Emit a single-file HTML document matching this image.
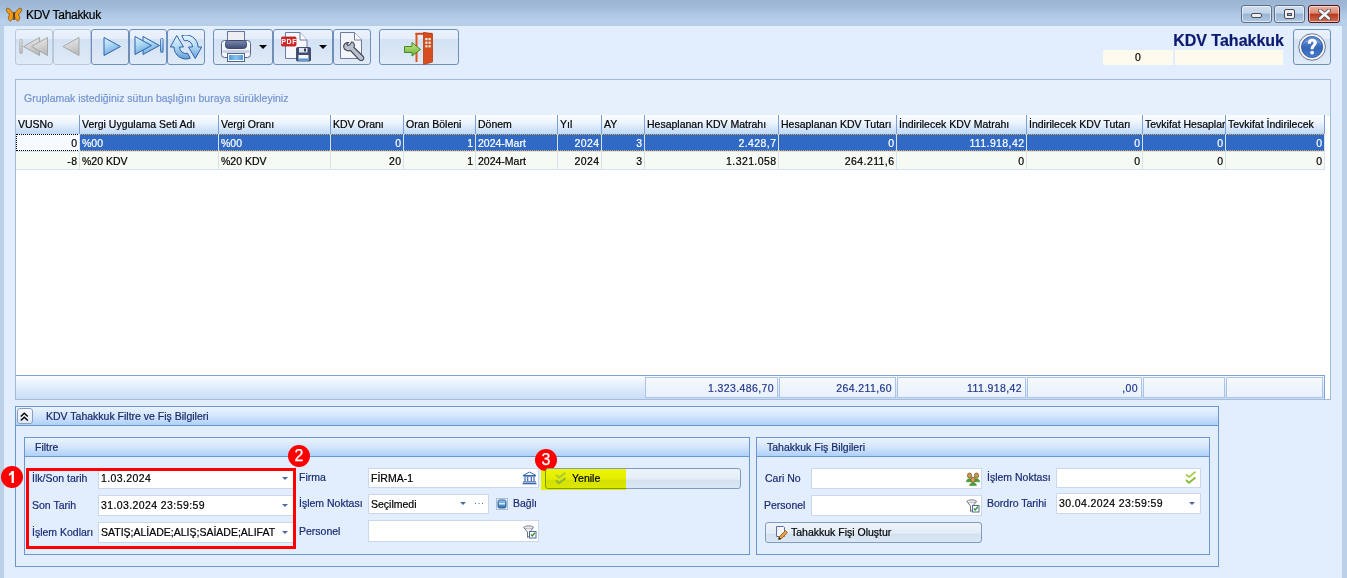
<!DOCTYPE html>
<html><head><meta charset="utf-8">
<style>
*{box-sizing:border-box;margin:0;padding:0}
html,body{width:1347px;height:578px;overflow:hidden}
body{-webkit-text-stroke:0.2px currentColor;position:relative;background:#e2eefd;font-family:"Liberation Sans",sans-serif;font-size:10.5px;color:#1e1e50}
.a{position:absolute}
#tb{left:0;top:0;width:1347px;height:26px;background:linear-gradient(#9ab4d3 0%,#a2bbd8 30%,#aec7e2 55%,#b8d0ea 80%,#b6cee8 100%)}
#lb{left:0;top:26px;width:4px;height:552px;background:#bcd1e8}
#rb{left:1342px;top:26px;width:5px;height:552px;background:#bcd1e8}
.btn{position:absolute;top:29px;height:36px;border:1px solid #8aa6c8;border-radius:3px;background:linear-gradient(#eaf2fc 0%,#e5eefa 25%,#d3e2f4 27%,#d8e5f5 60%,#e0ebf8 100%)}
.btn.dis{border-color:#b9c9dc}
.wbtn{position:absolute;top:5px;height:18px;border:1px solid #5f6f88;border-radius:3px;box-shadow:inset 0 0 0 1px rgba(255,255,255,0.55);background:linear-gradient(#cfdff0,#c0d4ea 45%,#98b4d4 50%,#b0c8e2)}
#grid{left:15px;top:79px;width:1316px;height:321px;border:1px solid #a3bbd9;background:#fff}
#grp{left:0;top:0;width:1314px;height:36px;background:#e6f0fc}
.hdr{position:absolute;top:35px;height:19px;background:linear-gradient(#fdfeff,#e9f2fd 45%,#bfd7f8);border-right:1px solid #789fd6;padding-left:2px;line-height:19px;white-space:nowrap;overflow:hidden;color:#000}
.cell{position:absolute;height:18px;border-right:1px solid #d6e2f0;border-bottom:1px solid #d6e2f0;line-height:17px;white-space:nowrap;overflow:hidden;padding:0 2px;color:#000}
.r{text-align:right;letter-spacing:0.4px;padding-right:1.6px}
.cell{line-height:19px}
.sel{background:#316ac5;color:#fff}
.alt{background:#f5fbf2}
.fc{position:absolute;top:297px;height:21px;border:1px solid #a9c4e8;background:linear-gradient(#f6f9fe,#e9f1fc);text-align:right;padding-right:3px;line-height:21px;color:#24388a;letter-spacing:0.4px}
.foc{background:#f7fbff}
.foc::after{content:"";box-sizing:border-box;position:absolute;left:0;top:0;right:1px;height:17px;border:1px dotted #000;border-right:none}
.sel{background-image:repeating-linear-gradient(90deg,#e8a23c 0 1px,transparent 1px 2px),repeating-linear-gradient(90deg,#e8a23c 0 1px,transparent 1px 2px);background-size:100% 1px,100% 1px;background-position:0 0,0 16px;background-repeat:no-repeat}
.gbox{position:absolute;border:1px solid #6a96d2}
.ghdr{position:absolute;left:0;top:0;right:0;height:19px;text-indent:1px;background:linear-gradient(#eaf3fe,#d4e6fc 50%,#add0fa);border-bottom:1px solid #6a96d2;line-height:18px;padding-left:9px;color:#1a2a6a}
.lbl{position:absolute;color:#1b2c75;white-space:nowrap}
.inp{position:absolute;height:18px;background:#fff;border:1px solid #c9d8ec;line-height:16px;padding-left:2px;color:#000;white-space:nowrap;overflow:hidden}
.dd{position:absolute;width:0;height:0;border-left:3px solid transparent;border-right:3px solid transparent;border-top:3px solid #4a6d9f}
.badge{position:absolute;width:22px;height:22px;border-radius:50%;background:#ff0000;color:#fff;font-size:16px;line-height:22px;text-align:center;font-weight:normal;-webkit-text-stroke:0.25px #fff}
</style></head><body>
<!-- title bar -->
<div id="tb" class="a">
  <svg class="a" style="left:6px;top:7px" width="16" height="15" viewBox="0 0 16 15">
    <path d="M7.5 7 C5 2 1 0 0.5 2 C0 4 2 7 4 7.5 C1.5 9 2 14 4.5 14 C6.5 13 7.5 10 7.5 8Z" fill="#f19b0e" stroke="#7a4208" stroke-width="0.7"/>
    <path d="M8.5 7 C11 2 15 0 15.5 2 C16 4 14 7 12 7.5 C14.5 9 14 14 11.5 14 C9.5 13 8.5 10 8.5 8Z" fill="#f19b0e" stroke="#7a4208" stroke-width="0.7"/>
    <rect x="7.3" y="5" width="1.4" height="8" fill="#4a2a10"/>
  </svg>
  <div class="a" style="left:26px;top:8px;font-size:12px;letter-spacing:-0.3px;color:#000">KDV Tahakkuk</div>
  <div class="wbtn" style="left:1241px;width:31px"><div class="a" style="left:9px;top:7px;width:11px;height:5px;background:#f2f0ec;border:1px solid #4a4a58;border-radius:2px"></div></div>
  <div class="wbtn" style="left:1274px;width:31px"><div class="a" style="left:9px;top:3px;width:11px;height:10px;border:1px solid #4a4a58;border-radius:2px;background:#f2f0ec"><div class="a" style="left:2px;top:3px;width:5px;height:3px;border:1px solid #4a4a58;background:#8fb1d8"></div></div></div>
  <div class="wbtn" style="left:1308px;width:32px;border-color:#4e1616;background:linear-gradient(#eab0a0,#dc8a74 45%,#b8391c 50%,#d06a50)">
    <svg class="a" style="left:9px;top:3px" width="13" height="11" viewBox="0 0 13 11"><path d="M2 1.5 L11 9.5 M11 1.5 L2 9.5" stroke="#4a4a58" stroke-width="4" stroke-linecap="round"/><path d="M2 1.5 L11 9.5 M11 1.5 L2 9.5" stroke="#f6f6f6" stroke-width="2.4" stroke-linecap="round"/></svg>
  </div>
</div>
<div id="lb" class="a"></div>
<div id="rb" class="a"></div>

<!-- toolbar -->
<svg width="0" height="0" style="position:absolute"><defs>
<linearGradient id="gg" x1="0" y1="0" x2="0.3" y2="1"><stop offset="0" stop-color="#f0f0f0"/><stop offset="1" stop-color="#bdbdbd"/></linearGradient>
<linearGradient id="bg" x1="0" y1="0" x2="0.4" y2="1"><stop offset="0" stop-color="#e4f6fd"/><stop offset="0.5" stop-color="#a9d6f2"/><stop offset="1" stop-color="#6ea6dc"/></linearGradient>
<linearGradient id="rg" x1="0" y1="0" x2="0" y2="1"><stop offset="0" stop-color="#e8f7fd"/><stop offset="1" stop-color="#6aa3da"/></linearGradient>
<linearGradient id="hg" x1="0" y1="0" x2="0" y2="1"><stop offset="0" stop-color="#5f8fd4"/><stop offset="0.45" stop-color="#3f70c0"/><stop offset="0.55" stop-color="#3566b8"/><stop offset="1" stop-color="#4a7fcc"/></linearGradient>
<linearGradient id="grg" x1="0" y1="0" x2="0" y2="1"><stop offset="0" stop-color="#c8e88a"/><stop offset="1" stop-color="#6cb23a"/></linearGradient>
<linearGradient id="rg2" gradientUnits="userSpaceOnUse" x1="0" y1="0" x2="0" y2="25"><stop offset="0" stop-color="#e6f6fd"/><stop offset="0.45" stop-color="#b4dcf3"/><stop offset="1" stop-color="#5f98d6"/></linearGradient>
<linearGradient id="cbg" x1="0" y1="0" x2="0" y2="1"><stop offset="0" stop-color="#9fd0f3"/><stop offset="0.5" stop-color="#5d9bd6"/><stop offset="1" stop-color="#3572b8"/></linearGradient>
<linearGradient id="slg" x1="0" y1="0" x2="0" y2="1"><stop offset="0" stop-color="#7a88ac"/><stop offset="1" stop-color="#3f4d76"/></linearGradient><linearGradient id="trg" x1="0" y1="0" x2="1" y2="0"><stop offset="0" stop-color="#4f98dc"/><stop offset="0.5" stop-color="#8cc2ee"/><stop offset="1" stop-color="#4f98dc"/></linearGradient>
</defs></svg>
<div class="btn dis" style="left:15px;width:38px">
<svg class="a" style="left:3px;top:7px" width="32" height="20" viewBox="0 0 32 20"><rect x="0.8" y="2.5" width="2.4" height="14" rx="0.8" fill="url(#gg)" stroke="#a8a8a8" stroke-width="0.8"/><path d="M4.5 9.5 L20.5 0.5 L20.5 18.5Z" fill="url(#gg)" stroke="#a0a0a0" stroke-width="0.9"/><path d="M12.5 9.5 L28.5 0.5 L28.5 18.5Z" fill="url(#gg)" stroke="#a0a0a0" stroke-width="0.9"/></svg>
</div>
<div class="btn dis" style="left:53px;width:38px">
<svg class="a" style="left:8px;top:7px" width="20" height="20" viewBox="0 0 20 20"><path d="M1 9.5 L17 0.5 L17 18.5Z" fill="url(#gg)" stroke="#a0a0a0" stroke-width="0.9"/></svg>
</div>
<div class="btn" style="left:91px;width:38px;border-color:#6f8fbb">
<svg class="a" style="left:11px;top:7px" width="20" height="20" viewBox="0 0 20 20"><path d="M1 0.5 L17.5 9.5 L1 18.5Z" fill="url(#bg)" stroke="#2f62ad" stroke-width="1"/></svg>
</div>
<div class="btn" style="left:129px;width:38px;border-color:#6f8fbb">
<svg class="a" style="left:4px;top:6px" width="32" height="20" viewBox="0 0 32 20"><path d="M9 0.5 L25.5 9.5 L9 18.5Z" fill="url(#bg)" stroke="#2f62ad" stroke-width="1"/><path d="M1 0.5 L17.5 9.5 L1 18.5Z" fill="url(#bg)" stroke="#2f62ad" stroke-width="1"/><rect x="26.5" y="2.5" width="2.6" height="14" rx="1" fill="url(#bg)" stroke="#2f62ad" stroke-width="0.8"/></svg>
</div>
<div class="btn" style="left:167px;width:38px;border-color:#6f8fbb">
<svg class="a" style="left:2px;top:5px" width="33" height="25" viewBox="0 0 33 25">
<path d="M6.75 0.5 L13.5 12 L9.5 12 A6.5 6.5 0 0 0 17.7 18.3 L20.3 23.2 A12 12 0 0 1 4 12 L0.3 12 Z" fill="url(#rg2)" stroke="#2f62ad" stroke-width="1" stroke-linejoin="round"/>
<path d="M25.25 23.5 L18.5 12 L22.5 12 A6.5 6.5 0 0 0 14.3 5.7 L11.7 0.8 A12 12 0 0 1 28 12 L31.7 12 Z" fill="url(#rg2)" stroke="#2f62ad" stroke-width="1" stroke-linejoin="round"/>
</svg>
</div>
<div class="btn" style="left:213px;width:60px;border-color:#6f8fbb">
<svg class="a" style="left:7px;top:1px" width="32" height="33" viewBox="0 0 32 33">
<rect x="0.5" y="9.5" width="29" height="17" rx="3" fill="#f4f6fa" stroke="#55648f" stroke-width="1"/>
<path d="M1.5 20.5 L28.5 20.5" stroke="#cdd3e2" stroke-width="3"/>
<rect x="6.5" y="0.5" width="17" height="12" fill="#eeeef3" stroke="#6b76a0" stroke-width="1"/>
<rect x="4.5" y="9.5" width="21" height="8" rx="3" fill="url(#slg)" stroke="#3b4870"/>
<rect x="6.5" y="22.5" width="17" height="8" fill="#fff" stroke="#55648f" stroke-width="1"/>
<rect x="8" y="24" width="14" height="5" fill="url(#trg)"/>
</svg>
<div class="a" style="left:45px;top:15px;width:0;height:0;border-left:4px solid transparent;border-right:4px solid transparent;border-top:4px solid #000"></div>
</div>
<div class="btn" style="left:273px;width:60px;border-color:#6f8fbb">
<svg class="a" style="left:7px;top:1px" width="32" height="31" viewBox="0 0 32 31">
<path d="M4.5 1.5 L19 1.5 L26 9 L26 27.5 L4.5 27.5 Z" fill="#f6f7fb" stroke="#6e7aa6" stroke-width="1"/>
<path d="M19 1.5 L19 9 L26 9" fill="#ffffff" stroke="#6e7aa6" stroke-width="1"/>
<rect x="0.5" y="6" width="14.5" height="9" rx="1" fill="#d42a2a" stroke="#b01a1a" stroke-width="0.8"/>
<text x="8.2" y="13.4" font-family="Liberation Sans" font-weight="bold" font-size="7" letter-spacing="0.6" fill="#fff" text-anchor="middle" style="-webkit-text-stroke:0">PDF</text>
<rect x="15.5" y="16.5" width="14" height="13.5" rx="1" fill="#3f4c72" stroke="#303a5c" stroke-width="0.8"/>
<rect x="18" y="17" width="8.5" height="4.5" fill="#dfe3ee"/><rect x="23" y="17.5" width="2" height="3" fill="#303a5c"/>
<rect x="17.5" y="24" width="10" height="5.5" fill="#f4f6fb"/><rect x="17.5" y="27.5" width="10" height="2" fill="#4c97dc"/>
</svg>
<div class="a" style="left:45px;top:15px;width:0;height:0;border-left:4px solid transparent;border-right:4px solid transparent;border-top:4px solid #000"></div>
</div>
<div class="btn" style="left:333px;width:38px;border-color:#6f8fbb">
<svg class="a" style="left:5px;top:1px" width="26" height="32" viewBox="0 0 26 32">
<path d="M1.5 1.5 L15.5 1.5 L22.5 9 L22.5 27.5 L1.5 27.5 Z" fill="#f4f5fa" stroke="#6e7aa6" stroke-width="1"/>
<path d="M15.5 1.5 L15.5 9 L22.5 9" fill="#fff" stroke="#6e7aa6" stroke-width="1"/>
<path d="M9.5 11.5 C6 11 4 14 5 17 C6 19.5 9 20.5 11.5 19.5 L20 28.5 C21 29.8 23 29.8 24 28.8 C25 27.8 25 26 23.8 25 L15 16.5 C16 14 15 11.5 12.8 10.8 L10.8 13.8 L8.8 14.5 L7.8 13 L9.5 11.5 Z" fill="#b9c2cc" stroke="#3e4656" stroke-width="1.1"/>
</svg>
</div>
<div class="btn" style="left:379px;width:80px;border-color:#6f8fbb">
<svg class="a" style="left:24px;top:1px" width="30" height="34" viewBox="0 0 30 34">
<path d="M12.5 2 L12.5 31" stroke="#e0521e" stroke-width="2"/><path d="M11.5 2.8 L28.5 2.8" stroke="#d8491a" stroke-width="2"/>
<path d="M19.5 1.3 L28.5 3 L28.5 31 L19.5 33.5 Z" fill="#d64e20" stroke="#b83c14" stroke-width="0.8"/>
<rect x="21.3" y="7" width="2.2" height="2.2" fill="#dff5e6"/><rect x="24.5" y="7" width="2.2" height="2.2" fill="#dff5e6"/>
<rect x="21.3" y="10.6" width="2.2" height="2.2" fill="#dff5e6"/><rect x="24.5" y="10.6" width="2.2" height="2.2" fill="#dff5e6"/>
<rect x="21.3" y="14.2" width="2.2" height="2.2" fill="#dff5e6"/><rect x="24.5" y="14.2" width="2.2" height="2.2" fill="#dff5e6"/>
<path d="M0.5 15.5 L8 15.5 L8 11.5 L16.5 18.5 L8 25 L8 21.5 L0.5 21.5 Z" fill="url(#grg)" stroke="#3f8a22" stroke-width="1"/>
</svg>
</div>

<div class="a" style="left:1100px;top:32px;width:184px;text-align:right;font-weight:bold;font-size:16px;color:#0c1a70">KDV Tahakkuk</div>
<div class="a" style="left:1103px;top:50px;width:70px;height:15px;background:#fffaee;text-align:center;line-height:15px;color:#000">0</div>
<div class="a" style="left:1175px;top:50px;width:108px;height:15px;background:#fffaee"></div>
<div class="btn" style="left:1293px;width:38px;border-color:#6f8fbb">
<svg class="a" style="left:4px;top:2px" width="30" height="30" viewBox="0.7 0.7 30 30">
<circle cx="14.8" cy="15.7" r="13.3" fill="#f6f8fc" stroke="#6c7696" stroke-width="1"/>
<circle cx="14.8" cy="15.7" r="10.6" fill="url(#hg)" stroke="#2c4f96" stroke-width="0.8"/>
<path d="M5 14 C8 9 21 9 24.6 14 C22 6 8 6 5 14Z" fill="#fff" opacity="0.25"/>
<path d="M10.5 12.5 C10.5 8.8 13 7.5 15 7.5 C17.8 7.5 19.5 9.3 19.5 11.5 C19.5 14.5 16.3 15 16.3 18 L13.3 18 C13.3 14 16.2 13.3 16.2 11.6 C16.2 10.6 15.6 10.2 15 10.2 C14 10.2 13.7 11 13.7 12.5 Z" fill="#fff"/>
<circle cx="14.8" cy="21.3" r="1.9" fill="#fff"/>
</svg>
</div>

<!-- grid -->
<div id="grid" class="a">
  <div id="grp" class="a"><div class="a" style="left:8px;top:12px;color:#7494d0">Gruplamak istediğiniz sütun başlığını buraya sürükleyiniz</div></div>
<div class="hdr" style="left:0px;width:64px">VUSNo</div>
<div class="hdr" style="left:64px;width:139px">Vergi Uygulama Seti Adı</div>
<div class="hdr" style="left:203px;width:112px">Vergi Oranı</div>
<div class="hdr" style="left:315px;width:73px">KDV Oranı</div>
<div class="hdr" style="left:388px;width:72px">Oran Böleni</div>
<div class="hdr" style="left:460px;width:82px">Dönem</div>
<div class="hdr" style="left:542px;width:44px">Yıl</div>
<div class="hdr" style="left:586px;width:43px">AY</div>
<div class="hdr" style="left:629px;width:134px">Hesaplanan KDV Matrahı</div>
<div class="hdr" style="left:763px;width:118px">Hesaplanan KDV Tutarı</div>
<div class="hdr" style="left:881px;width:130px">İndirilecek KDV Matrahı</div>
<div class="hdr" style="left:1011px;width:116px">İndirilecek KDV Tutarı</div>
<div class="hdr" style="left:1127px;width:83px">Tevkifat Hesaplanan</div>
<div class="hdr" style="left:1210px;width:99px">Tevkifat İndirilecek</div>
<div class="cell r foc" style="top:54px;left:0px;width:64px">0</div>
<div class="cell sel" style="top:54px;left:64px;width:139px">%00</div>
<div class="cell sel" style="top:54px;left:203px;width:112px">%00</div>
<div class="cell r sel" style="top:54px;left:315px;width:73px">0</div>
<div class="cell r sel" style="top:54px;left:388px;width:72px">1</div>
<div class="cell sel" style="top:54px;left:460px;width:82px">2024-Mart</div>
<div class="cell r sel" style="top:54px;left:542px;width:44px">2024</div>
<div class="cell r sel" style="top:54px;left:586px;width:43px">3</div>
<div class="cell r sel" style="top:54px;left:629px;width:134px">2.428,7</div>
<div class="cell r sel" style="top:54px;left:763px;width:118px">0</div>
<div class="cell r sel" style="top:54px;left:881px;width:130px">111.918,42</div>
<div class="cell r sel" style="top:54px;left:1011px;width:116px">0</div>
<div class="cell r sel" style="top:54px;left:1127px;width:83px">0</div>
<div class="cell r sel" style="top:54px;left:1210px;width:99px">0</div>
<div class="cell r alt" style="top:72px;left:0px;width:64px">-8</div>
<div class="cell alt" style="top:72px;left:64px;width:139px">%20 KDV</div>
<div class="cell alt" style="top:72px;left:203px;width:112px">%20 KDV</div>
<div class="cell r alt" style="top:72px;left:315px;width:73px">20</div>
<div class="cell r alt" style="top:72px;left:388px;width:72px">1</div>
<div class="cell alt" style="top:72px;left:460px;width:82px">2024-Mart</div>
<div class="cell r alt" style="top:72px;left:542px;width:44px">2024</div>
<div class="cell r alt" style="top:72px;left:586px;width:43px">3</div>
<div class="cell r alt" style="top:72px;left:629px;width:134px">1.321.058</div>
<div class="cell r alt" style="top:72px;left:763px;width:118px">264.211,6</div>
<div class="cell r alt" style="top:72px;left:881px;width:130px">0</div>
<div class="cell r alt" style="top:72px;left:1011px;width:116px">0</div>
<div class="cell r alt" style="top:72px;left:1127px;width:83px">0</div>
<div class="cell r alt" style="top:72px;left:1210px;width:99px">0</div>
<div class="a" style="left:0;top:295px;width:1309px;height:24px;border-top:1px solid #7ea3d6;border-right:1px solid #7ea3d6;background:linear-gradient(#fafcff,#dbe9fb 60%,#c9ddf7)"></div>
<div class="fc" style="left:629px;width:133px">1.323.486,70</div>
<div class="fc" style="left:763px;width:117px">264.211,60</div>
<div class="fc" style="left:881px;width:129px">111.918,42</div>
<div class="fc" style="left:1011px;width:115px">,00</div>
<div class="fc" style="left:1127px;width:82px"></div>
<div class="fc" style="left:1210px;width:97px"></div>
</div>

<!-- bottom group -->
<div class="gbox" style="left:15px;top:406px;width:1204px;height:161px">
  <div class="ghdr" style="padding-left:29px">KDV Tahakkuk Filtre ve Fiş Bilgileri</div>
</div>
<div class="gbox" style="left:24px;top:437px;width:726px;height:118px">
  <div class="ghdr">Filtre</div>
</div>
<div class="gbox" style="left:756px;top:437px;width:454px;height:118px">
  <div class="ghdr">Tahakkuk Fiş Bilgileri</div>
</div>

<!-- collapse btn -->
<div class="a" style="left:17px;top:408px;width:16px;height:16px;border:1px solid #8a9fbb;border-radius:3px;background:linear-gradient(#f6f9fe,#e8effa 60%,#dfe8f4)">
<svg class="a" style="left:2px;top:3px" width="9" height="10" viewBox="0 0 9 10"><path d="M0.8 4.6 L4.3 1.2 L7.8 4.6 M0.8 8.6 L4.3 5.2 L7.8 8.6" stroke="#000" stroke-width="1.4" fill="none"/></svg>
</div>

<!-- filtre content -->
<div class="lbl" style="left:32px;top:472px">İlk/Son tarih</div>
<div class="lbl" style="left:32px;top:499px">Son Tarih</div>
<div class="lbl" style="left:32px;top:526px">İşlem Kodları</div>
<div class="inp" style="left:98px;top:468px;width:196px;height:21px;line-height:19px;letter-spacing:0.4px">1.03.2024</div>
<div class="inp" style="left:98px;top:495px;width:196px;height:21px;line-height:19px;letter-spacing:0.4px">31.03.2024 23:59:59</div>
<div class="inp" style="left:98px;top:522px;width:196px;height:21px;line-height:19px">SATIŞ;ALİADE;ALIŞ;SAİADE;ALIFAT</div>
<div class="a" style="left:26px;top:468px;width:270px;height:81px;border:3px solid #ff0000"></div>
<div class="badge" style="left:1px;top:466px"><svg class="a" style="left:0;top:0" width="22" height="22" viewBox="0 0 22 22"><path d="M10.6 5 L12.9 5 L12.9 17 L10.6 17 L10.6 8.3 C9.8 9 8.9 9.5 7.9 9.8 L7.9 7.7 C9.1 7.2 10 6.3 10.6 5 Z" fill="#fff"/></svg></div>
<div class="badge" style="left:288px;top:445px">2</div>
<div class="badge" style="left:535px;top:449px">3</div>

<div class="lbl" style="left:299px;top:471px">Firma</div>
<div class="lbl" style="left:299px;top:497px">İşlem Noktası</div>
<div class="lbl" style="left:299px;top:525px">Personel</div>
<div class="inp" style="left:368px;top:468px;width:171px;height:20px;line-height:18px">FİRMA-1</div>
<div class="inp" style="left:368px;top:494px;width:121px;height:20px;line-height:18px">Seçilmedi</div>
<svg class="a" style="left:496px;top:498px" width="12" height="12" viewBox="0 0 12 12"><rect x="0.5" y="0.5" width="11" height="11" fill="#f2f6fb" stroke="#a9bfd9"/><rect x="2" y="2" width="8" height="8" rx="1.5" fill="url(#cbg)" stroke="#2d5c92" stroke-width="1"/><rect x="3" y="5" width="6" height="1.5" fill="#d8ecfb"/></svg>
<div class="lbl" style="left:513px;top:497px">Bağlı</div>
<div class="inp" style="left:368px;top:520px;width:171px;height:22px"></div>

<div class="a" style="left:545px;top:468px;width:196px;height:21px;border:1px solid #7f9bc1;border-radius:3px;background:linear-gradient(#eef4fb,#e3ecf7 55%,#d3e0ef 56%,#dce7f4)"></div>
<div class="a" style="left:541px;top:469px;width:85px;height:21px;background:#ffff00;mix-blend-mode:multiply"></div>
<svg class="a" style="left:555px;top:472px" width="12" height="13" viewBox="0 0 12 13"><path d="M1 3 L4 5.5 L10.5 0.8" stroke="#a6c83a" stroke-width="1.8" fill="none"/><path d="M1 8.5 L4 11.2 L10.5 6" stroke="#8cb43a" stroke-width="1.8" fill="none"/></svg>
<div class="lbl" style="left:572px;top:472px;color:#000">Yenile</div>

<!-- tahakkuk content -->
<div class="lbl" style="left:765px;top:472px">Cari No</div>
<div class="lbl" style="left:764px;top:499px">Personel</div>
<div class="inp" style="left:811px;top:468px;width:171px;height:21px"></div>
<div class="inp" style="left:811px;top:495px;width:171px;height:21px"></div>
<div class="a" style="left:765px;top:522px;width:217px;height:21px;border:1px solid #7f9bc1;border-radius:3px;background:linear-gradient(#eef4fb,#e3ecf7 55%,#d3e0ef 56%,#dce7f4)"></div>
<div class="lbl" style="left:791px;top:526px;color:#000">Tahakkuk Fişi Oluştur</div>
<div class="lbl" style="left:987px;top:471px">İşlem Noktası</div>
<div class="lbl" style="left:987px;top:497px">Bordro Tarihi</div>
<div class="inp" style="left:1056px;top:468px;width:145px;height:20px"></div>
<div class="inp" style="left:1056px;top:493px;width:145px;height:21px;line-height:19px;letter-spacing:0.4px">30.04.2024 23:59:59</div>

<i class="dd" style="left:282px;top:477px"></i>
<i class="dd" style="left:282px;top:504px"></i>
<i class="dd" style="left:282px;top:531px"></i>
<i class="dd" style="left:460px;top:502px"></i>
<i class="dd" style="left:1189px;top:502px"></i>
<svg class="a" style="left:475px;top:503px" width="9" height="2" viewBox="0 0 9 2"><rect x="0" y="0" width="1" height="1" fill="#4a6d9f"/><rect x="3.5" y="0" width="1" height="1" fill="#4a6d9f"/><rect x="7" y="0" width="1" height="1" fill="#4a6d9f"/></svg>
<svg class="a" style="left:522px;top:471px" width="15" height="14" viewBox="0 0 15 14">
<path d="M1 4.5 L7.5 1 L14 4.5 Z" fill="#fff" stroke="#3a67ad" stroke-width="1" stroke-linejoin="round"/>
<rect x="1.5" y="4.5" width="12" height="1.2" fill="#3a67ad"/>
<path d="M3 6 V10 M5.7 6 V10 M9.3 6 V10 M12 6 V10" stroke="#3a67ad" stroke-width="1.2"/>
<rect x="1" y="10.3" width="13" height="1.2" fill="#3a67ad"/><rect x="0.5" y="12" width="14" height="1.3" fill="#3a67ad"/>
</svg>
<svg class="a" style="left:523px;top:525px" width="14" height="14" viewBox="0 0 14 14">
<path d="M0.8 2.5 C0.8 0.5 10.5 0.5 10.5 2.5 L6.8 7 L6.8 11 L4.5 12.5 L4.5 7 Z" fill="#fff" stroke="#6b7280" stroke-width="1"/>
<ellipse cx="5.6" cy="2.5" rx="4.2" ry="1.4" fill="#e6e8ec" stroke="#8a9099" stroke-width="0.6"/>
<rect x="6.5" y="6.5" width="6.5" height="6.5" fill="#fff" stroke="#55679a" stroke-width="1"/>
<path d="M8 9.5 L9.3 11 L11.8 7.8" stroke="#2a9a2a" stroke-width="1.4" fill="none"/>
</svg>
<svg class="a" style="left:966px;top:499px" width="14" height="14" viewBox="0 0 14 14">
<path d="M0.8 2.5 C0.8 0.5 10.5 0.5 10.5 2.5 L6.8 7 L6.8 11 L4.5 12.5 L4.5 7 Z" fill="#fff" stroke="#6b7280" stroke-width="1"/>
<ellipse cx="5.6" cy="2.5" rx="4.2" ry="1.4" fill="#e6e8ec" stroke="#8a9099" stroke-width="0.6"/>
<rect x="6.5" y="6.5" width="6.5" height="6.5" fill="#fff" stroke="#55679a" stroke-width="1"/>
<path d="M8 9.5 L9.3 11 L11.8 7.8" stroke="#2a9a2a" stroke-width="1.4" fill="none"/>
</svg>
<svg class="a" style="left:966px;top:472px" width="14" height="14" viewBox="0 0 14 14">
<path d="M0.3 9.8 C0.5 5.8 6.5 5.8 6.7 9.8 Z" fill="#46a336" stroke="#2f7a22" stroke-width="0.5"/><path d="M7.3 9.8 C7.5 5.8 13.5 5.8 13.7 9.8 Z" fill="#46a336" stroke="#2f7a22" stroke-width="0.5"/>
<ellipse cx="3.5" cy="3.6" rx="2.1" ry="2.6" fill="#c89a50" stroke="#6d4a18" stroke-width="0.7"/><ellipse cx="10.5" cy="3.6" rx="2.1" ry="2.6" fill="#c89a50" stroke="#6d4a18" stroke-width="0.7"/>
<path d="M3.6 13.6 C3.8 9.8 10.2 9.8 10.4 13.6 Z" fill="#46a336" stroke="#2f7a22" stroke-width="0.5"/>
<ellipse cx="7" cy="7.8" rx="2.2" ry="2.7" fill="#d0a458" stroke="#6d4a18" stroke-width="0.7"/>
</svg>
<svg class="a" style="left:1185px;top:471px" width="12" height="14" viewBox="0 0 12 14"><path d="M1 3.5 L4 6 L10.5 0.8" stroke="#a6d050" stroke-width="1.8" fill="none"/><path d="M1 9 L4 11.8 L10.5 6.5" stroke="#86bb3a" stroke-width="1.8" fill="none"/></svg>
<svg class="a" style="left:776px;top:526px" width="12" height="14" viewBox="0 0 12 14">
<path d="M0.5 0.5 H7.5 L8.5 1.5 V10.5 H0.5 Z" fill="#f4f6fb" stroke="#6070a0" stroke-width="1"/>
<path d="M3 11 L9.5 4.5 L11.5 6.5 L5 13 L2.5 13.5 Z" fill="#e8a040" stroke="#8a5418" stroke-width="0.8"/>
<path d="M2.5 13.5 L3 11 L5 13 Z" fill="#222"/>
</svg>
</body></html>
